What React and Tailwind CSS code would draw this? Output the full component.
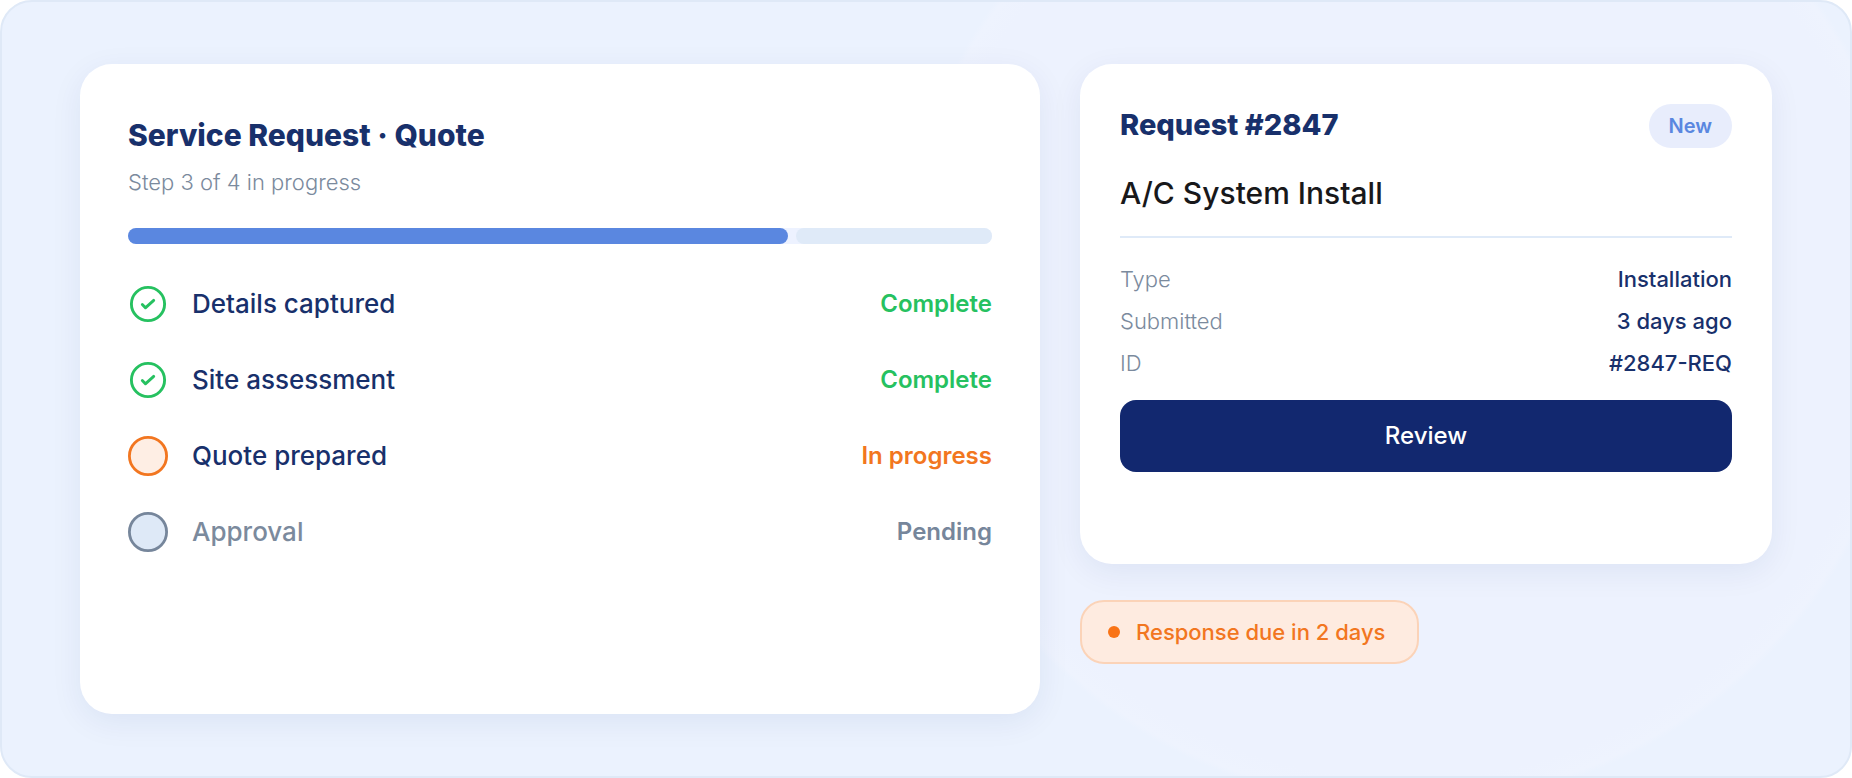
const steps = [
  { label: 'Details captured', status: 'Complete', state: 'done' },
  { label: 'Site assessment', status: 'Complete', state: 'done' },
  { label: 'Quote prepared', status: 'In progress', state: 'active' },
  { label: 'Approval', status: 'Pending', state: 'pending' },
];

const details = [
  { term: 'Type', value: 'Installation' },
  { term: 'Submitted', value: '3 days ago' },
  { term: 'ID', value: '#2847-REQ' },
];

const labelColor = {
  done: 'text-[#18306b]',
  active: 'text-[#18306b]',
  pending: 'text-[#7b8a9d]',
};

const statusColor = {
  done: 'text-[#26c160]',
  active: 'text-[#f27620]',
  pending: 'text-[#76869b]',
};

function StepIcon({ state }) {
  if (state === 'done') {
    return (
      <svg viewBox="0 0 40 40" className="size-10 shrink-0" fill="none" stroke="#26c160" aria-hidden="true">
        <circle cx="20" cy="20" r="16.6" strokeWidth="2.9" />
        <path d="M14.3 20.6 L17.4 23.8 L25.7 16.4" strokeWidth="2.9" strokeLinecap="round" strokeLinejoin="round" />
      </svg>
    );
  }
  const active = state === 'active';
  return (
    <svg viewBox="0 0 40 40" className="size-10 shrink-0" aria-hidden="true">
      <circle
        cx="20"
        cy="20"
        r="18.6"
        strokeWidth="2.8"
        fill={active ? '#feeee4' : '#dee9f7'}
        stroke={active ? '#f27620' : '#76869b'}
      />
    </svg>
  );
}

function ProgressCard() {
  return (
    <section className="min-h-[650px] rounded-[32px] bg-white p-12 shadow-[0_8px_32px_rgba(20,40,110,0.07)]">
      <h2 className="mt-1 text-[30px]/[38px] font-extrabold text-[#18306b]">Service Request · Quote</h2>
      <p className="mt-3 text-[22px]/[32px] font-light text-[#7b8a9d]">Step 3 of 4 in progress</p>
      <div
        role="progressbar"
        aria-label="Quote progress"
        aria-valuemin={0}
        aria-valuemax={4}
        aria-valuenow={3}
        className="mt-[30px] flex h-4 gap-2 rounded-full bg-[#edf2ff]"
      >
        <div className="grow-[660] basis-0 rounded-full bg-[#5a87e0]" />
        <div className="grow-[196] basis-0 rounded-full bg-[#dfeaf8]" />
      </div>
      <ol className="mt-10 flex flex-col gap-9">
        {steps.map((step) => (
          <li key={step.label} className="flex h-10 items-center gap-6">
            <StepIcon state={step.state} />
            <span className={`grow text-[26px]/[40px] font-medium ${labelColor[step.state]}`}>{step.label}</span>
            <span className={`text-[24px]/[40px] font-semibold ${statusColor[step.state]}`}>{step.status}</span>
          </li>
        ))}
      </ol>
    </section>
  );
}

function RequestCard() {
  return (
    <section className="min-h-[500px] rounded-[32px] bg-white p-10 shadow-[0_8px_32px_rgba(20,40,110,0.07)]">
      <div className="flex h-11 items-start justify-between">
        <h2 className="text-[29px]/[42px] font-extrabold text-[#18306b]">Request #2847</h2>
        <span className="rounded-full bg-[#e8edfc] px-5 text-[20px]/[44px] font-semibold text-[#5a87e0]">New</span>
      </div>
      <h3 className="mt-6 text-[30px]/[42px] font-medium text-[#18181a]">A/C System Install</h3>
      <hr className="mt-[22px] border-t-2 border-[#dfeaf8]" />
      <dl className="mt-5">
        {details.map((item) => (
          <div key={item.term} className="flex justify-between text-[22px]/[42px]">
            <dt className="font-light text-[#7b8a9d]">{item.term}</dt>
            <dd className="font-medium text-[#18306b]">{item.value}</dd>
          </div>
        ))}
      </dl>
      <button
        type="button"
        className="mt-4 h-[72px] w-full cursor-pointer rounded-2xl bg-[#12286f] text-[24px] font-medium text-white"
      >
        Review
      </button>
    </section>
  );
}

export default function App() {
  return (
    <main className="min-h-screen rounded-[32px] border-2 border-[#dfe9f7] bg-[#ebf2fe] bg-[radial-gradient(circle_at_76%_297px,#edf2fe_0,#edf2fe_480px,#eef3fe_502px,#ebf2fe_508px)] px-[78px] py-[62px] font-[Inter,'Open_Sans',sans-serif]">
      <div className="grid grid-cols-[960fr_692fr] items-start gap-10">
        <ProgressCard />
        <div className="flex flex-col items-start gap-9">
          <div className="w-full">
            <RequestCard />
          </div>
          <p className="flex h-16 items-center gap-4 rounded-3xl border-2 border-[#fbd3b8] bg-[#feebe0] pr-8 pl-[26px] text-[22px] font-medium text-[#f27620]">
            <span className="size-3 rounded-full bg-[#f97316]" />
            Response due in 2 days
          </p>
        </div>
      </div>
    </main>
  );
}
